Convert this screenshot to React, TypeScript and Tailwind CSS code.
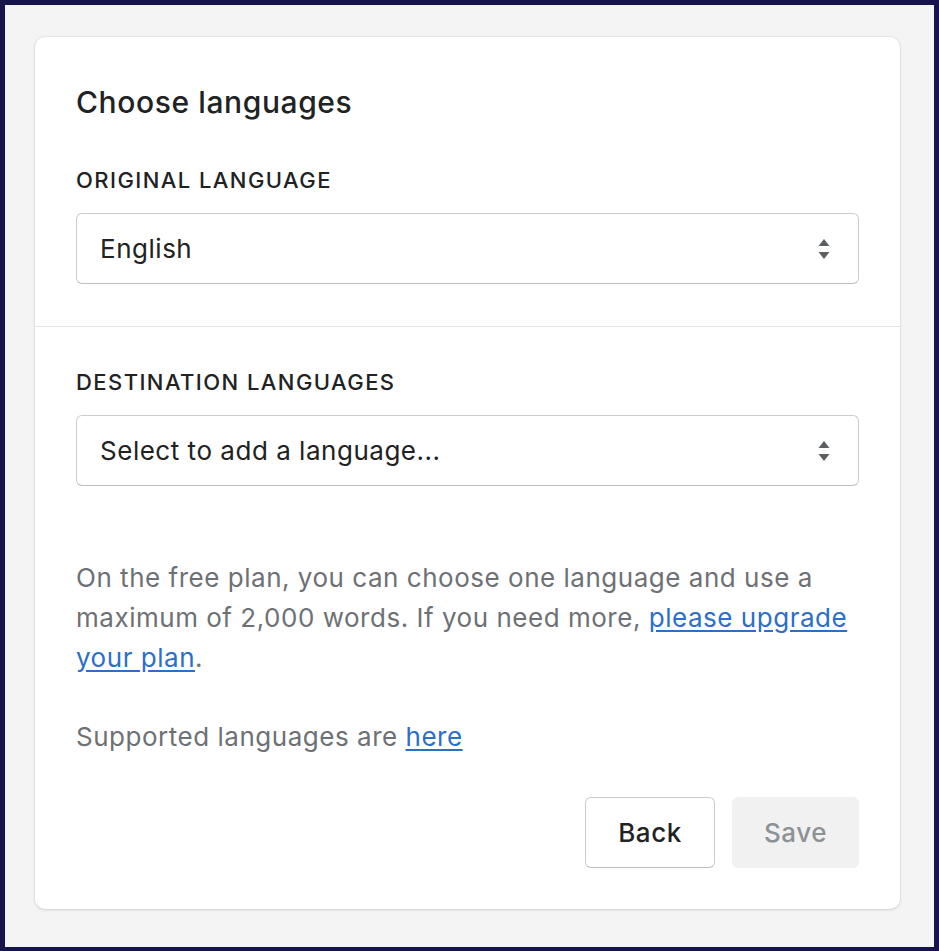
import React from "react";

function Chevrons() {
  return (
    <svg width="12" height="20" viewBox="0 0 12 20" className="shrink-0">
      <path d="M6 0 L11.5 7 H0.5 Z" fill="#5c5f62" />
      <path d="M6 20 L11.5 13 H0.5 Z" fill="#5c5f62" />
    </svg>
  );
}

function Select({ value }: { value: string }) {
  return (
    <div className="flex h-[71px] items-center justify-between rounded-[6px] border border-[#c9cccf] border-b-[#babfc3] bg-white pl-[23px] pr-[28px] text-[26px] tracking-[0.02em] text-[#202223]">
      <span>{value}</span>
      <Chevrons />
    </div>
  );
}

export default function App() {
  return (
    <div
      className="h-[951px] w-[939px] border-[5px] border-b-4 border-[#17134d] bg-[#f4f4f4] pl-[30px] pr-[34px] pt-[32px]"
      style={{ fontFamily: "Inter, 'Noto Sans', sans-serif" }}
    >
      <div className="rounded-[10px] bg-white shadow-[0_0_0_1px_rgba(63,63,68,0.05),0_1px_3px_0_rgba(63,63,68,0.15)]">
        <div className="border-b border-[#e1e3e5] px-[41px] pb-[42px] pt-[45px]">
          <h2 className="h-[40px] text-[30px] font-medium leading-[40px] tracking-[0.02em] text-[#202223]">
            Choose languages
          </h2>
          <div className="mt-[43px] h-[30px] text-[22px] font-medium uppercase leading-[30px] tracking-[0.065em] text-[#202223]">
            Original language
          </div>
          <div className="mt-[18px]">
            <Select value="English" />
          </div>
        </div>
        <div className="px-[41px] pb-[41px] pt-[40px]">
          <div className="h-[30px] text-[22px] font-medium uppercase leading-[30px] tracking-[0.065em] text-[#202223]">
            Destination languages
          </div>
          <div className="mt-[18px]">
            <Select value="Select to add a language..." />
          </div>
          <p className="mt-[72px] text-[26px] leading-[40px] tracking-[0.02em] text-[#6d7175]">
            On the free plan, you can choose one language and use a maximum of 2,000 words. If you need more,{" "}
            <a className="text-[#2c6ecb] underline underline-offset-[3px]">please upgrade your plan</a>.
          </p>
          <p className="mt-[39px] text-[26px] leading-[40px] tracking-[0.02em] text-[#6d7175]">
            Supported languages are <a className="text-[#2c6ecb] underline underline-offset-[3px]">here</a>
          </p>
          <div className="mt-[40px] flex justify-end gap-[17px]">
            <button className="h-[71px] w-[130px] rounded-[6px] border border-[#c9cccf] border-b-[#babfc3] bg-white text-[26px] font-medium tracking-[0.02em] text-[#202223]">
              Back
            </button>
            <button className="h-[71px] w-[127px] rounded-[6px] bg-[#f1f1f1] text-[26px] font-medium tracking-[0.02em] text-[#8c9196]">
              Save
            </button>
          </div>
        </div>
      </div>
    </div>
  );
}
